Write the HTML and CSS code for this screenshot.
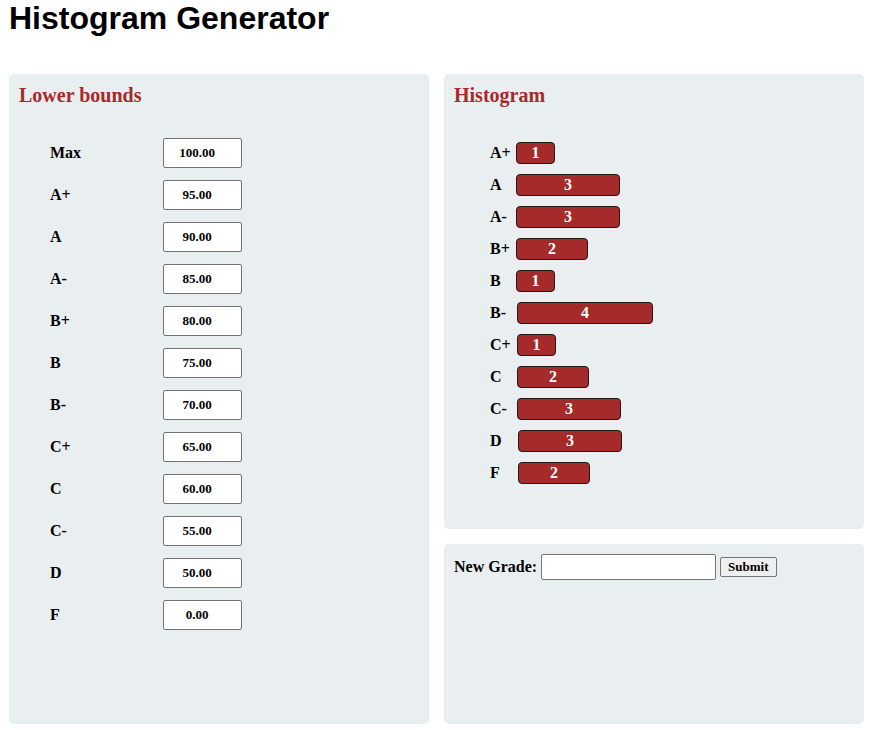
FILE: index.html
```html
<!DOCTYPE html>
<html lang="en">
<head>
<meta charset="utf-8">
<title>Histogram Generator</title>
<link rel="stylesheet" href="styles.css">
</head>
<body>
<h1 class="title">Histogram Generator</h1>
<main class="layout">
  <section class="panel bounds">
    <h2 class="panel-title">Lower bounds</h2>
    <div class="bounds-list">
      <label class="bound-label">Max</label><input class="bound-input" type="text" value="100.00">
      <label class="bound-label">A+</label><input class="bound-input" type="text" value="95.00">
      <label class="bound-label">A</label><input class="bound-input" type="text" value="90.00">
      <label class="bound-label">A-</label><input class="bound-input" type="text" value="85.00">
      <label class="bound-label">B+</label><input class="bound-input" type="text" value="80.00">
      <label class="bound-label">B</label><input class="bound-input" type="text" value="75.00">
      <label class="bound-label">B-</label><input class="bound-input" type="text" value="70.00">
      <label class="bound-label">C+</label><input class="bound-input" type="text" value="65.00">
      <label class="bound-label">C</label><input class="bound-input" type="text" value="60.00">
      <label class="bound-label">C-</label><input class="bound-input" type="text" value="55.00">
      <label class="bound-label">D</label><input class="bound-input" type="text" value="50.00">
      <label class="bound-label">F</label><input class="bound-input" type="text" value="0.00">
    </div>
  </section>
  <div class="right-col">
    <section class="panel histogram">
      <h2 class="panel-title">Histogram</h2>
      <div class="hist-list">
        <span class="hist-label">A+</span><div class="bar-cell"><span class="bar" style="width:39px">1</span></div>
        <span class="hist-label">A</span><div class="bar-cell"><span class="bar" style="width:104px">3</span></div>
        <span class="hist-label">A-</span><div class="bar-cell"><span class="bar" style="width:104px">3</span></div>
        <span class="hist-label">B+</span><div class="bar-cell"><span class="bar" style="width:72px">2</span></div>
        <span class="hist-label">B</span><div class="bar-cell"><span class="bar" style="width:39px">1</span></div>
        <span class="hist-label">B-</span><div class="bar-cell shift-1"><span class="bar" style="width:136px">4</span></div>
        <span class="hist-label">C+</span><div class="bar-cell shift-1"><span class="bar" style="width:39px">1</span></div>
        <span class="hist-label">C</span><div class="bar-cell shift-1"><span class="bar" style="width:72px">2</span></div>
        <span class="hist-label">C-</span><div class="bar-cell shift-1"><span class="bar" style="width:104px">3</span></div>
        <span class="hist-label">D</span><div class="bar-cell shift-2"><span class="bar" style="width:104px">3</span></div>
        <span class="hist-label">F</span><div class="bar-cell shift-2"><span class="bar" style="width:72px">2</span></div>
      </div>
    </section>
    <section class="panel entry">
      <form class="entry-form" onsubmit="return false">
        <label class="entry-label" for="grade">New Grade:</label>
        <input class="entry-input" id="grade" type="text">
        <button class="entry-button" type="submit">Submit</button>
      </form>
    </section>
  </div>
</main>
</body>
</html>
```

FILE: styles.css
```css
* { box-sizing: border-box; }

body {
  margin: 0;
  font-family: "Liberation Serif", "Times New Roman", serif;
  font-size: 16px;
  color: #000;
  background: #fff;
}

.title {
  margin: 0 0 37px 9px;
  font-family: "Liberation Sans", Arial, sans-serif;
  font-size: 32px;
  line-height: 37px;
  font-weight: bold;
}

.layout {
  display: grid;
  grid-template-columns: 420px 420px;
  column-gap: 15px;
  padding-left: 9px;
}

.panel {
  background: #e9eef1;
  border-radius: 5px;
  padding: 10px;
}

.bounds { height: 650px; }

.right-col {
  display: flex;
  flex-direction: column;
  gap: 15px;
}

.histogram { height: 455px; }
.entry { height: 180px; }

.panel-title {
  margin: 0;
  font-size: 20px;
  line-height: 23px;
  font-weight: bold;
  color: #a52a2a;
}

.bounds-list {
  display: grid;
  grid-template-columns: 113px 79px;
  grid-auto-rows: 30px;
  row-gap: 12px;
  align-items: center;
  margin-top: 31px;
  padding-left: 31px;
}

.bound-label { font-weight: bold; }

.bound-input {
  width: 79px;
  height: 30px;
  border: 1px solid #767676;
  border-radius: 2px;
  background: #fff;
  padding: 0 13px 0 2px;
  text-align: center;
  font-family: "Liberation Serif", "Times New Roman", serif;
  font-size: 13px;
  font-weight: bold;
  color: #000;
}

.hist-list {
  display: grid;
  grid-template-columns: 26px auto;
  grid-auto-rows: 22px;
  row-gap: 10px;
  align-items: center;
  margin-top: 35px;
  padding-left: 36px;
}

.hist-label { font-weight: bold; }

.bar-cell { display: flex; }
.bar-cell.shift-1 { padding-left: 1px; }
.bar-cell.shift-2 { padding-left: 2px; }

.bar {
  display: flex;
  align-items: center;
  justify-content: center;
  height: 22px;
  background: #a52a2a;
  border: 1px solid #1a1a1a;
  border-radius: 4px;
  color: #fff;
  font-weight: bold;
}

.entry-form {
  display: flex;
  align-items: center;
  gap: 4px;
}

.entry-label { font-weight: bold; }

.entry-input {
  width: 175px;
  height: 26px;
  border: 1px solid #767676;
  border-radius: 2px;
  background: #fff;
  padding: 1px 2px;
}

.entry-button {
  height: 20px;
  padding: 0 7px;
  border: 1px solid #767676;
  border-radius: 2px;
  background: #efefef;
  font-family: "Liberation Serif", "Times New Roman", serif;
  font-size: 13px;
  font-weight: bold;
  color: #000;
}
```
